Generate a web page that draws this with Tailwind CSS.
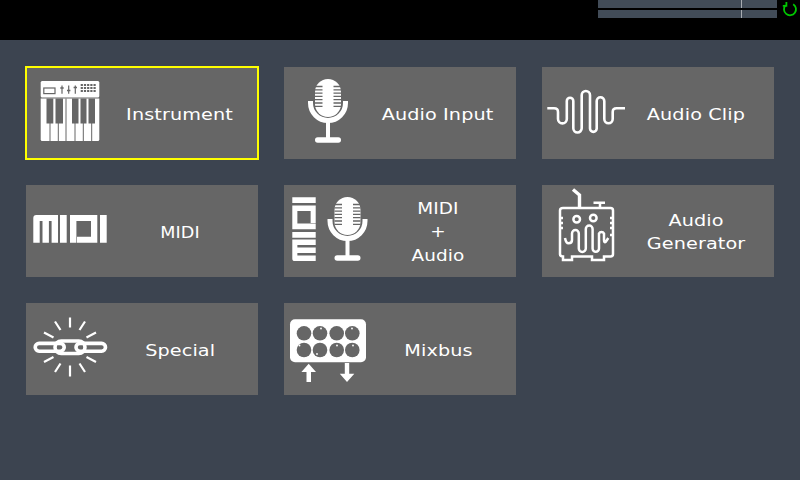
<!DOCTYPE html>
<html lang="en">
  <head>
    <meta charset="UTF-8" />
    <title>Engine type</title>
    <script src="https://cdn.jsdelivr.net/npm/@tailwindcss/browser@4"></script>
  </head>
  <body class="w-[800px] h-[480px] overflow-hidden bg-[#3c4450] text-white font-['DejaVu_Sans',sans-serif]">
    <!-- top status bar -->
    <header class="h-10 bg-black flex justify-end items-start">
      <div class="w-[179px] flex flex-col gap-[2px]">
        <div class="h-2 bg-[#424c58] relative"><div class="absolute left-[143px] top-0 w-px h-full bg-[#a8acb2]"></div></div>
        <div class="h-2 bg-[#424c58] relative"><div class="absolute left-[143px] top-0 w-px h-full bg-[#a8acb2]"></div></div>
      </div>
      <div class="w-[23px] h-5 flex justify-center">
        <svg width="16" height="16" viewBox="0 0 16 16" class="mt-[1px] ml-[2px]" fill="none" stroke="#00c800" stroke-width="1.8">
          <path d="M3.6 4.2A6 6 0 1 0 11.2 3.2" />
          <path d="M4.4 1V4.8H0.8" />
        </svg>
      </div>
    </header>

    <main class="grid grid-cols-[repeat(3,232px)] auto-rows-[92px] gap-[26px] pl-[26px] pt-[27px] text-[16px] leading-[23.5px] tracking-[0.1px]">
      <!-- Instrument -->
      <button class="flex items-center bg-[#666] outline-2 -outline-offset-1 outline-[#ffff00]">
        <svg width="88" height="92" viewBox="0 0 88 92" class="shrink-0">
          <rect x="14.7" y="14" width="58.6" height="16.4" rx="1.5" fill="#fff" />
          <rect x="17.8" y="21" width="11.2" height="5.6" fill="none" stroke="#666" stroke-width="1.2" />
          <path d="M36 18.5V26.7M42.7 18.5V26.7M49.3 18.5V26.7" stroke="#666" stroke-width="1.2" />
          <path d="M34.3 21H37.7M41 23.5H44.4M47.6 20.5H51" stroke="#666" stroke-width="1.6" />
          <path d="M54.7 18H70M54.7 21H70M54.7 24H70" stroke="#666" stroke-width="1.8" stroke-dasharray="2.2 1" />
          <path d="M14.7 31.5H73.3V72.5a1.5 1.5 0 0 1-1.5 1.5H16.2a1.5 1.5 0 0 1-1.5-1.5Z" fill="#fff" />
          <path d="M20.5 31.5h6.8v25h-6.8ZM29.5 31.5h7.5v25h-7.5ZM46 31.5h6.5v25H46ZM54.5 31.5h6v25h-6ZM62.5 31.5h6.5v25h-6.5Z" fill="#666" />
          <path d="M24 56V74M32.3 56V74M40 31.5V74M49 56V74M57.3 56V74M65.7 56V74" stroke="#666" stroke-width="1" />
        </svg>
        <span class="flex-1 pr-3 pt-1 text-center"><span class="inline-block scale-x-[1.2]">Instrument</span></span>
      </button>

      <!-- Audio Input -->
      <button class="flex items-center bg-[#666]">
        <svg width="88" height="92" viewBox="0 0 88 92" class="shrink-0">
          <g id="mic">
            <rect x="31" y="12" width="26" height="38" rx="13" fill="#fff" />
            <path d="M31 19.5H38.5M49.5 19.5H57M31 22.8H38.5M49.5 22.8H57M31 26.1H38.5M49.5 26.1H57M31 29.4H38.5M49.5 29.4H57M31 32.7H38.5M49.5 32.7H57M31 36H38.5M49.5 36H57M31 39.3H38.5M49.5 39.3H57" stroke="#666" stroke-width="1.3" />
            <path d="M26.5 34V36a17.5 17.5 0 0 0 35 0V34" fill="none" stroke="#fff" stroke-width="5" />
            <rect x="42" y="54" width="4" height="18" fill="#fff" />
            <rect x="31" y="70.3" width="26" height="5.4" rx="2.7" fill="#fff" />
          </g>
        </svg>
        <span class="flex-1 pr-3 pt-1 text-center"><span class="inline-block scale-x-[1.2]">Audio Input</span></span>
      </button>

      <!-- Audio Clip -->
      <button class="flex items-center bg-[#666]">
        <svg width="88" height="92" viewBox="0 0 88 92" class="shrink-0">
          <path d="M5.3 41.3H12Q16 41.3 16 45V52a4.4 4.4 0 0 0 8.8 0V34a3.25 3.25 0 0 1 6.5 0V61.3a4.2 4.2 0 0 0 8.4 0V28.2a4.15 4.15 0 0 1 8.3 0V61.5a3.35 3.35 0 0 0 6.7 0V34a3.8 3.8 0 0 1 7.6 0V52a4.2 4.2 0 0 0 8.4 0V45Q70.7 41.3 74.7 41.3H83" fill="none" stroke="#fff" stroke-width="2.6" />
        </svg>
        <span class="flex-1 pr-3 pt-1 text-center"><span class="inline-block scale-x-[1.2]">Audio Clip</span></span>
      </button>

      <!-- MIDI -->
      <button class="flex items-center bg-[#666]">
        <svg width="88" height="92" viewBox="0 0 88 92" class="shrink-0">
          <path id="midi" fill="#fff" fill-rule="evenodd" d="M7.3 33a3 3 0 0 1 3-3H32V57.7H25.6V36H22.9V57.7H16.5V36H13.7V57.7H7.3ZM34 30H40.7V57.7H34ZM44 30H71.3V57.7H51V51.7H65V36H50.4V57.7H44ZM74 30H80.7V57.7H74Z" />
        </svg>
        <span class="flex-1 pr-3 pt-1 text-center"><span class="inline-block scale-x-[1.1]">MIDI</span></span>
      </button>

      <!-- MIDI + Audio -->
      <button class="flex items-center bg-[#666]">
        <svg width="88" height="92" viewBox="0 0 88 92" class="shrink-0">
          <use href="#midi" transform="translate(8.3 76) rotate(-90) scale(0.868 0.845) translate(-7.3 -30)" />
          <use href="#mic" x="19.5" />
        </svg>
        <span class="flex-1 pr-3 pt-0.5 text-center"><span class="inline-block scale-x-[1.15]">MIDI<br />+<br />Audio</span></span>
      </button>

      <!-- Audio Generator -->
      <button class="flex items-center bg-[#666]">
        <svg width="88" height="92" viewBox="0 0 88 92" class="shrink-0" fill="none" stroke="#fff" stroke-width="2.5">
          <path d="M21 23H58M68.5 23Q71 23 71 25.5V69Q71 71.5 68.5 71.5H62V75H50V71.5H30V75H21V71.5Q18 71.5 18 69V25.5Q18 23 21 23M58 23H68.5M58 23V18M51.5 17.7H63" />
          <path d="M37.5 23V10L31 4.5" stroke-width="3.4" />
          <path d="M18 33H21M18 38H21M18 43H21M71 33H68M71 38H68M71 43H68M71 50H68" />
          <circle cx="34.7" cy="34.3" r="3.3" />
          <circle cx="51.3" cy="33" r="3.3" />
          <path d="M23 53Q24 58.3 26.5 58.3 30 58.3 30 55V48.5a3.4 3.4 0 0 1 6.8 0V63.5a3.5 3.5 0 0 0 7 0V44a3.4 3.4 0 0 1 6.8 0V63.5a3.2 3.2 0 0 0 6.4 0V48.5a2.8 2.8 0 0 1 5 0V55Q62 58.3 64 56.5L66.3 53" />
        </svg>
        <span class="flex-1 pr-3 pt-0.5 text-center"><span class="inline-block scale-x-[1.2]">Audio<br />Generator</span></span>
      </button>

      <!-- Special -->
      <button class="flex items-center bg-[#666]">
        <svg width="88" height="92" viewBox="0 0 88 92" class="shrink-0" fill="none" stroke="#fff">
          <path stroke-width="2.2" d="M44 14.5V24.5M29 18.5L34.5 27M59 18.5L53.5 27M18 29.5L27.5 34.5M70 29.5L60.5 34.5M18 59L27.5 54M70 59L60.5 54M29 69L34.5 60.5M59 69L53.5 60.5M44 62.5V73.5" />
          <g stroke-width="3.6">
            <rect x="9.2" y="40.4" width="29" height="7.8" rx="3.9" />
            <rect x="50" y="40.4" width="29.5" height="7.8" rx="3.9" />
            <rect x="29" y="38" width="30" height="12.5" rx="6.25" />
          </g>
        </svg>
        <span class="flex-1 pr-3 pt-1 text-center"><span class="inline-block scale-x-[1.2]">Special</span></span>
      </button>

      <!-- Mixbus -->
      <button class="flex items-center bg-[#666]">
        <svg width="88" height="92" viewBox="0 0 88 92" class="shrink-0">
          <rect x="6" y="16.3" width="76" height="43" rx="5" fill="#fff" />
          <g fill="#666">
            <circle cx="20" cy="30.3" r="7.3" />
            <circle cx="36" cy="30.3" r="7.3" />
            <circle cx="52.7" cy="30.3" r="7.3" />
            <circle cx="68.3" cy="30.3" r="7.3" />
            <circle cx="20" cy="47" r="7.3" />
            <circle cx="36" cy="47" r="7.3" />
            <circle cx="52.7" cy="47" r="7.3" />
            <circle cx="68.3" cy="47" r="7.3" />
          </g>
          <g fill="#fff">
            <circle cx="37" cy="25.5" r="0.9" />
            <circle cx="68" cy="25.5" r="0.9" />
            <circle cx="15.5" cy="42.5" r="0.9" />
            <circle cx="33" cy="51" r="0.9" />
            <circle cx="53" cy="42.5" r="0.9" />
            <circle cx="69" cy="42.5" r="0.9" />
            <path d="M24.7 60.7L32 69H27V79H22.5V69H17.4Z" />
            <path d="M60.8 60H65.2V70.7H70.3L63 79 55.8 70.7H60.8Z" />
          </g>
        </svg>
        <span class="flex-1 pr-3 pt-1 text-center"><span class="inline-block scale-x-[1.2]">Mixbus</span></span>
      </button>
    </main>
  </body>
</html>
